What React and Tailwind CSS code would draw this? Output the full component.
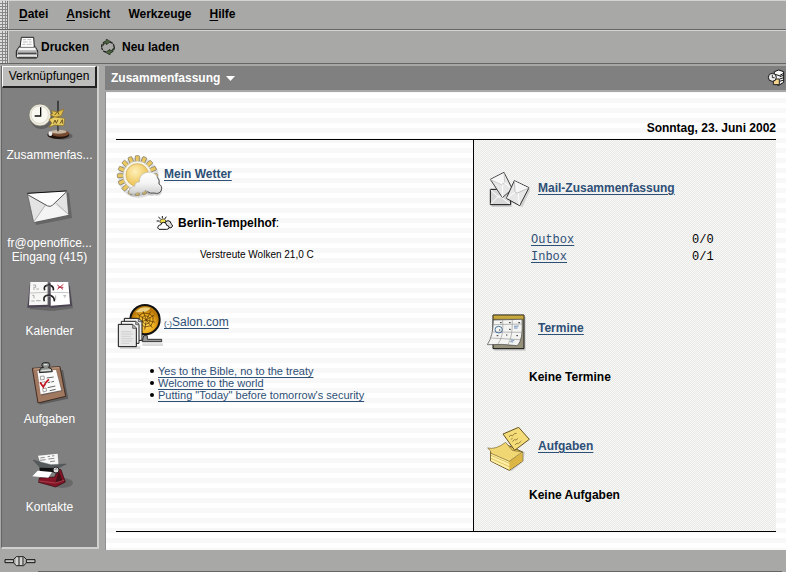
// src/App.jsx

import React from 'react';

const ClockIcon = () => (
  <svg className="h-11 w-12" viewBox="78 21 144 132" aria-hidden="true">
    <ellipse cx="187" cy="138" rx="31" ry="11" fill="#444" opacity="0.55" />
    <circle cx="124" cy="83" r="34" fill="#333" opacity="0.4" />
    <ellipse cx="175" cy="134" rx="33" ry="13" fill="#21130d" />
    <ellipse cx="181" cy="130" rx="27" ry="10" fill="#774a32" />
    <ellipse cx="176" cy="125" rx="24" ry="6" fill="#c6b5a0" />
    <ellipse cx="151" cy="131" rx="6" ry="7" fill="#eee" />
    <path d="M174 32v92" stroke="#222" strokeWidth="4" />
    <path d="M177 60v60" stroke="#777" strokeWidth="2" />
    <circle cx="120" cy="75" r="33" fill="#efece0" stroke="#6a685e" strokeWidth="2" />
    <circle cx="119" cy="74" r="26" fill="#faf9f1" stroke="#cfccbd" strokeWidth="2" />
    <path d="M122 52v26h-18" fill="none" stroke="#111" strokeWidth="4" />
    <path d="M155 62l17 4 20-9-8 20-18 5-16-8 8-3z" fill="#dfbf50" stroke="#8b6d1c" strokeWidth="2" />
    <path d="M147 88l17-7 30 4-3 22-27-2-17 7 8-13z" fill="#eace66" stroke="#8b6d1c" strokeWidth="2" />
    <path d="M164 75l9-10 4 9M160 101l5-11 4 10 5-11M180 101l7-12v12" fill="none" stroke="#6b561d" strokeWidth="3" />
  </svg>
);

const EnvelopeIcon = () => (
  <svg className="h-11 w-12" viewBox="78 285 144 132" aria-hidden="true">
    <path d="M90 320l117-12 9 76-108 21z" fill="#333" opacity="0.35" />
    <path d="M82 311l118-8 6 71-105 23z" fill="#e3e3e3" stroke="#555" strokeWidth="2" />
    <path d="M101 396l39-54 23 1 43 31z" fill="#f4f4f4" />
    <path d="M101 396l36-52M205 373l-36-33" fill="none" stroke="#999" strokeWidth="2" />
    <path d="M82 311l118-8-43 43q-7 6-13 1z" fill="#fcfcfc" />
    <path d="M83 314l60 34q8 3 14-2l42-40" fill="none" stroke="#555" strokeWidth="3" />
    <path d="M82 310l118-7" stroke="#111" strokeWidth="3" />
  </svg>
);

const PlannerIcon = () => (
  <svg className="h-11 w-12" viewBox="78 24 144 132" aria-hidden="true">
    <path d="M93 63h117l9 67-60 8-69-5z" fill="#333" opacity="0.35" />
    <path d="M90 53h117l9 69-62 7-7-4-65 3z" fill="#4c4453" />
    <path d="M91 51h53v68l-57 2z" fill="#f7f7f5" />
    <path d="M150 51h55l5 67-58 4z" fill="#fff" />
    <path d="M90 84l54-2M151 82l55 1" stroke="#aaa" strokeWidth="2" />
    <path d="M144 52v68M151 53v68" stroke="#777" strokeWidth="3" />
    <path d="M134 76q-4-13 7-15h9q12 3 10 15M133 109q-5-15 8-18h9q14 4 13 18" fill="none" stroke="#222" strokeWidth="5" />
    <path d="M139 63h13M138 94h15" stroke="#aaa" strokeWidth="2" />
    <path d="M99 60h8v7h-7M99 72h6M109 72h8M97 91h5v9M94 108h10M108 107h14M190 92h7l-4 6M167 91v14" fill="none" stroke="#888" strokeWidth="2" />
    <path d="M172 60l17 13M190 58l-18 15M174 67h16" stroke="#b63449" strokeWidth="3" />
  </svg>
);

const ClipboardIcon = () => (
  <svg className="h-11 w-12" viewBox="78 288 144 132" aria-hidden="true">
    <path d="M105 318l84-3 16 86-86 18z" fill="#333" opacity="0.45" />
    <path d="M97 310l83-5 17 89-83 20z" fill="#a17860" stroke="#422b21" strokeWidth="3" />
    <path d="M101 312l77-4" stroke="#c8a38b" strokeWidth="3" />
    <path d="M111 322l57-5 20 61-64 14z" fill="#555" opacity="0.6" />
    <path d="M112 318l56-3 16 61-62 12z" fill="#fbfbfb" />
    <path d="M121 334l11-1 1 10-11 2zM124 352l11-2 2 10-11 2zM128 371l10-2 2 9-10 3z" fill="none" stroke="#777" strokeWidth="2" />
    <path d="M140 339l21-3M143 353l8-2M154 351l8-2M143 368l23-5M149 377l18-4" stroke="#666" strokeWidth="3" />
    <path d="M120 352l10 14q8-17 17-23" fill="none" stroke="#c51421" strokeWidth="5" />
    <path d="M118 323q-1-15 13-16l-5-4v-6q2-4 7-4h10q5 0 6 5v5l-4 4q12 2 12 13z" fill="#8b908d" stroke="#222" strokeWidth="3" />
    <path d="M124 317l29-2M132 299h10" stroke="#dfe3e0" strokeWidth="4" />
  </svg>
);

const RolodexIcon = () => (
  <svg className="h-11 w-12" viewBox="78 117 144 132" aria-hidden="true">
    <ellipse cx="187" cy="219" rx="32" ry="15" fill="#333" opacity="0.3" />
    <path d="M114 137l59-6 3 42-50 3z" fill="#f7f7f7" />
    <path d="M121 144l13-2M120 151l17-2M143 140l7-1M156 138l7-1M145 147l18-2M150 155l15-2" stroke="#555" strokeWidth="2" />
    <path d="M99 150l54 14 46-2-31 16-47-4z" fill="#555b5d" stroke="#3c4041" strokeWidth="1" />
    <path d="M118 173l44 1v13l-42-1z" fill="#101010" />
    <path d="M118 204l46-3 10-24 9 2 13 37-29 15-51-14z" fill="#821426" stroke="#2e070d" strokeWidth="2" />
    <path d="M166 218l10-36 12 31z" fill="#451018" />
    <path d="M117 213l48 6 27-8" fill="none" stroke="#bd5360" strokeWidth="2" />
    <path d="M113 182l43 4-11 17-48-4z" fill="#fff" />
    <circle cx="168" cy="180" r="9" fill="#dedede" stroke="#222" strokeWidth="3" />
    <path d="M164 180q4-8 8-2" fill="none" stroke="#777" strokeWidth="3" />
  </svg>
);

const RAYS = Array.from({ length: 16 }, (_, i) => i * 22.5);

const SunIcon = () => (
  <svg className="h-12 w-12 shrink-0" viewBox="33 39 144 144" aria-hidden="true">
    <defs>
      <radialGradient id="sun" cx="40%" cy="35%">
        <stop offset="0" stopColor="#fff1bb" />
        <stop offset="1" stopColor="#efca65" />
      </radialGradient>
      <linearGradient id="cloud" x1="0" y1="0" x2="0" y2="1">
        <stop offset="0" stopColor="#fff" />
        <stop offset="0.5" stopColor="#f4f4f4" />
        <stop offset="1" stopColor="#cfcfcf" />
      </linearGradient>
    </defs>
    <circle cx="101" cy="113" r="55" fill="none" stroke="#999" strokeWidth="12" opacity="0.3" />
    {RAYS.map((angle) => (
      <rect
        key={angle}
        x="91" y="47" width="12" height="20" rx="2"
        fill="#ebc85f" stroke="#77715f" strokeWidth="2"
        transform={`rotate(${angle} 97 107)`}
      />
    ))}
    <circle cx="97" cy="106" r="43" fill="#f7f4e8" stroke="#b5b2a6" strokeWidth="2" />
    <circle cx="97" cy="105" r="34" fill="url(#sun)" stroke="#c9a24a" strokeWidth="2" />
    <path d="M75 166q-4-18 14-22 0-13 13-12 2-28 26-31 22-2 29 14 10 8 5 21 13 6 8 22-5 12-22 8-12 6-26-7-13 13-23 5-11 10-24 2z" fill="#888" opacity="0.4" />
    <path d="M73 159q-4-17 16-20 1-13 14-13 0-25 24-29 23-3 30 16 9 6 5 19 11 6 7 19-6 13-22 8-12 4-25-9-13 14-23 6-12 10-26 3z" fill="url(#cloud)" stroke="#bbb" strokeWidth="2" />
    <path d="M157 112q8 7 5 20 11 6 7 19-6 13-22 8-10 3-20-4" fill="none" stroke="#555" strokeWidth="3" />
  </svg>
);

const PartlyCloudyIcon = () => (
  <svg className="size-[18px]" viewBox="156 222 54 54" aria-hidden="true">
    <path d="M163 231l7 6M175 228v7M187 230l-5 7M158 243h8" stroke="#111" strokeWidth="3" />
    <path d="M168 248v-6l6-5h7l5 6-5 7z" fill="#f3df4c" stroke="#222" strokeWidth="2" />
    <path d="M183 253q0-11 9-11 9 1 9 9 6 3 4 9-3 5-11 3z" fill="#ddd" stroke="#111" strokeWidth="3" />
    <path d="M165 268q-7-4-2-10 2-4 7-3 2-8 9-8 8 0 9 9 8 1 7 7-1 5-7 5z" fill="#fff" stroke="#111" strokeWidth="3" />
  </svg>
);

const NewsIcon = () => (
  <svg className="h-12 w-12 shrink-0" viewBox="33 21 144 144" aria-hidden="true">
    <defs>
      <radialGradient id="globe" cx="50%" cy="65%">
        <stop offset="0" stopColor="#ffd75a" />
        <stop offset="0.6" stopColor="#f0b020" />
        <stop offset="1" stopColor="#b97808" />
      </radialGradient>
    </defs>
    <path d="M45 158h61M112 149h62" stroke="#aaa" strokeWidth="8" opacity="0.4" />
    <path d="M116 122h11v11h43v7h-58z" fill="#999" stroke="#333" strokeWidth="3" />
    <circle cx="120" cy="74" r="44" fill="url(#globe)" stroke="#111" strokeWidth="6" />
    <path d="M91 52q15-20 45-14-4 12-23 13-11 1-22 1z" fill="#fff3b4" opacity="0.7" />
    <g fill="none" stroke="#4b2b00" strokeWidth="2">
      <path d="M124 75l-27-18M124 75l-10-27M124 75l13-25M124 75l24-15M124 75l26 7M124 75l18 23M124 75l-5 29M124 75l-27 10" />
      <path d="M103 61l11-7 18 2 12 8v15l-6 13-19 4-16-14zM112 67l5-5 12 2 6 6v8l-4 7-11 3-7-8z" />
    </g>
    <path d="M58 70h42l11 9v57H58z" fill="#eee" stroke="#111" strokeWidth="3" />
    <path d="M49 79h43l10 9v57H49z" fill="#f5f5f5" stroke="#222" strokeWidth="3" />
    <path d="M40 88h43l11 11v56H40z" fill="#e8e8e8" stroke="#111" strokeWidth="3" />
    <path d="M83 89v11h11M92 80v9h9M100 71v9h10" fill="#bbb" stroke="#333" strokeWidth="2" />
    <path d="M49 110h31M49 117h36M49 124h28M49 131h36M49 138h32M49 145h24" stroke="#c3c3c3" strokeWidth="2" />
  </svg>
);

const MailsIcon = () => (
  <svg className="size-11 shrink-0" viewBox="69 42 132 132" aria-hidden="true">
    <path d="M83 105h60v51H83zM155 83l44 21-24 53-42-20z" fill="#aaa" opacity="0.45" />
    <path d="M79 103h61v46H79z" fill="#d8d8d8" stroke="#111" strokeWidth="3" />
    <path d="M80 147l25-25 33 25M80 105l27 24" fill="none" stroke="#fff" strokeWidth="3" />
    <path d="M79 73l41-21 25 50-30 26z" fill="#e7e7e7" stroke="#444" strokeWidth="3" />
    <path d="M80 74l32 15 10-6-2-29" fill="#f7f7f7" stroke="#bbb" strokeWidth="2" />
    <path d="M115 127l1-38M143 101l-22-18" stroke="#fff" strokeWidth="3" />
    <path d="M151 77l44 21-28 54-40-22z" fill="#e7e7e7" stroke="#333" strokeWidth="3" />
    <path d="M151 78l2 31q1 6 7 5l34-15" fill="#f7f7f7" stroke="#aaa" strokeWidth="2" />
    <path d="M128 129l25-17M166 150l-3-36" stroke="#fff" strokeWidth="3" />
  </svg>
);

const CalendarIcon = () => (
  <svg className="size-11 shrink-0" viewBox="69 27 132 132" aria-hidden="true">
    <path d="M91 51h94v101H91z" fill="#888" opacity="0.35" />
    <path d="M87 45h93v101H87z" fill="#95917b" stroke="#111" strokeWidth="3" />
    <path d="M88 46h91v12H88z" fill="#c6a83f" stroke="#68551c" strokeWidth="2" />
    <path d="M88 60l86-2q4 62-14 79-43-6-90-3 18-27 18-74z" fill="#f4f4f3" stroke="#444" strokeWidth="2" />
    <path d="M90 74l84-2M87 96l86 1M80 114l89 5M116 60q4 50-15 73M145 60q1 53-14 75" fill="none" stroke="#999" strokeWidth="2" />
    <path d="M108 68h5M135 68h5M163 68h5M135 88h5M105 90h4M126 105h4M98 107h5M157 107h5" stroke="#333" strokeWidth="3" />
    <path d="M150 79l14-1M150 84h11M141 120l10 1M139 125l9 1" stroke="#6c91b6" strokeWidth="3" />
    <ellipse cx="104" cy="89" rx="11" ry="10" fill="none" stroke="#47739b" strokeWidth="3" />
  </svg>
);

const NotesIcon = () => (
  <svg className="size-11 shrink-0" viewBox="67 36 132 132" aria-hidden="true">
    <path d="M82 112l44-13 54 12-3 28-38 31-57-28z" fill="#999" opacity="0.4" />
    <path d="M78 111l45-23 51 23v27l-40 28-56-28z" fill="#f0cf60" stroke="#6a5520" strokeWidth="3" />
    <path d="M79 114l55 24 39-26v25l-39 27-55-26z" fill="#fff0a5" />
    <path d="M134 139l39-26v25l-39 27z" fill="#dfb843" />
    <path d="M79 121l55 24 39-25M79 130l55 25 39-27" fill="none" stroke="#d0ae4b" strokeWidth="2" />
    <path d="M69 99q24 6 54-17l20 24 30 5-39 28-55-24q1-8-10-16z" fill="#f1d773" stroke="#75602a" strokeWidth="2" />
    <path d="M115 57l47-20 32 36-44 33z" fill="#f4dc79" stroke="#665121" strokeWidth="3" />
    <path d="M133 66l5-6 5 3 6-7 7-1M143 80l6-6 5 1 6-5M151 90l6-6 4 2 9-8M139 73l5-3" fill="none" stroke="#6c5924" strokeWidth="2" />
  </svg>
);

const PrinterIcon = () => (
  <svg className="h-6 w-6" viewBox="45 102 72 72" aria-hidden="true">
    <path d="M49 150l9-14h47l8 14v16q-1 5-5 5H54q-5 0-5-5z" fill="#e6e6e4" stroke="#111" strokeWidth="3" />
    <path d="M64 109h37l2 31H60z" fill="#fff" stroke="#222" strokeWidth="3" />
    <path d="M69 116h9M82 116h12M69 123h14M87 123h8M67 130h9M80 130h15" stroke="#999" strokeWidth="2" />
    <path d="M57 139h49l5 11H51z" fill="#f6f6f4" stroke="#555" strokeWidth="2" />
    <path d="M51 153h61v9H51z" fill="#aaa" />
    <path d="M54 157h55M55 169h53" stroke="#333" strokeWidth="3" />
  </svg>
);

const ReloadIcon = () => (
  <svg className="h-4 w-4" viewBox="300 117 48 48" aria-hidden="true">
    <path d="M305 141q-1-12 12-15M330 126q12 3 12 15M343 141q0 13-12 15M318 156q-12-3-13-14" fill="none" stroke="#222" strokeWidth="4" strokeDasharray="9 3" />
    <path d="M319 117l13 8-13 9v-5q-7 1-10 8-1-13 10-15zM330 165l-13-8 13-9v5q7-1 10-8 1 13-10 15z" fill="#4d6541" stroke="#1c2416" strokeWidth="2" />
  </svg>
);

const SummaryIcon = () => (
  <svg className="size-[18px]" viewBox="441 27 54 54" aria-hidden="true">
    <path d="M463 35l13-5 15 5v32l-15 9-13-5z" fill="#f7f7f7" stroke="#111" strokeWidth="3" />
    <path d="M465 43l13 4 13-7M479 50l12-4M479 57l12-4M479 64l12-4" fill="none" stroke="#111" strokeWidth="3" />
    <path d="M460 57h18v17h-18z" fill="#f5d48d" stroke="#222" strokeWidth="3" />
    <circle cx="457" cy="52" r="12" fill="#eee" stroke="#111" strokeWidth="3" />
    <path d="M457 44v9h7" fill="none" stroke="#333" strokeWidth="3" />
  </svg>
);

const PlugIcon = () => (
  <svg className="h-3 w-8" viewBox="9 434 96 36" aria-hidden="true">
    <path d="M12 448h27v9H12zM75 448h27v9H75z" fill="#c4c4c2" stroke="#111" strokeWidth="3" />
    <path d="M38 447l8-8h22l8 8v11l-8 8H46l-8-8z" fill="#b9b9b4" stroke="#222" strokeWidth="3" />
    <path d="M48 441v23M60 441v23" stroke="#eee" strokeWidth="3" />
    <path d="M54 438v29M66 440v25" stroke="#333" strokeWidth="3" />
  </svg>
);

const MENUS = ['Datei', 'Ansicht', 'Werkzeuge', 'Hilfe'];

const SHORTCUTS = [
  { icon: ClockIcon, lines: ['Zusammenfas...'] },
  { icon: EnvelopeIcon, lines: ['fr@openoffice...', 'Eingang (415)'] },
  { icon: PlannerIcon, lines: ['Kalender'] },
  { icon: ClipboardIcon, lines: ['Aufgaben'] },
  { icon: RolodexIcon, lines: ['Kontakte'] },
];

const HEADLINES = [
  'Yes to the Bible, no to the treaty',
  'Welcome to the world',
  'Putting "Today" before tomorrow\'s security',
];

const FOLDERS = [
  { name: 'Outbox', count: '0/0' },
  { name: 'Inbox', count: '0/1' },
];

// Dotted grip at the left end of each bar
const Grip = () => (
  <div className="w-2 border-r border-[#777] bg-[radial-gradient(circle_at_1px_1px,#ddd_1px,#888_1px)] bg-[size:3px_3px]" />
);

const Link = ({ children, className = '' }) => (
  <a href="#" className={`text-[#2e4f76] underline underline-offset-2 ${className}`}>{children}</a>
);

// Icon with a linked title next to it
const Heading = ({ icon: Icon, className = '', children }) => (
  <h2 className={`flex items-center ${className}`}>
    <Icon />
    <span className="pb-1.5 leading-4">{children}</span>
  </h2>
);

const App = () => {
  return (
    <div className="flex min-h-screen flex-col bg-[#a8a8a6] font-['Liberation_Sans',Arial,sans-serif] text-xs text-black">
      <nav className="flex h-[30px] border-t border-b border-t-[#d4d4d2] border-b-[#666]">
        <Grip />
        <div className="flex items-center gap-[18px] border-l border-[#d4d4d2] px-2.5 pb-0.5 font-bold">
          {MENUS.map((menu) => (
            <button key={menu} type="button">
              {menu === 'Werkzeuge' ? menu : (
                <><span className="underline underline-offset-2">{menu[0]}</span>{menu.slice(1)}</>
              )}
            </button>
          ))}
        </div>
      </nav>

      <div className="flex h-[34px] border-t border-b border-t-[#d4d4d2] border-b-[#666]">
        <Grip />
        <div className="flex items-center gap-[11px] border-l border-[#d4d4d2] px-1.5 font-bold">
          <button type="button" className="flex items-center gap-0.5"><PrinterIcon />Drucken</button>
          <button type="button" className="flex items-center gap-1.5"><ReloadIcon />Neu laden</button>
        </div>
      </div>

      <div className="flex grow pt-0.5">
        <aside className="mr-1.5 ml-px w-[98px] shrink-0 self-stretch pb-px">
          <div className="flex h-full flex-col border-r-2 border-b-2 border-l border-r-[#d0d0ce] border-b-[#d0d0ce] border-l-[#666] bg-[#808080]">
            <button type="button" className="h-[22px] border-t border-r-2 border-b-2 border-l border-t-white border-r-[#222] border-b-[#222] border-l-white bg-[#bdbdbb] pb-0.5">
              Verknüpfungen
            </button>
            <ul className="pt-[9px]">
              {SHORTCUTS.map(({ icon: Icon, lines }) => (
                <li key={lines[0]} className="h-[88px]">
                  <button type="button" className="flex w-full flex-col items-center gap-[7px] text-white">
                    <Icon />
                    <span className="leading-[14px] whitespace-nowrap">
                      {lines.map((line) => <span key={line} className="block">{line}</span>)}
                    </span>
                  </button>
                </li>
              ))}
            </ul>
          </div>
        </aside>

        <main className="flex min-w-0 grow flex-col">
          <div className="flex h-6 items-center justify-between bg-[#808080] pr-px pl-1.5">
            <button type="button" className="flex items-center gap-1.5 font-bold text-white">
              Zusammenfassung
              <svg className="h-[5px] w-[9px]" viewBox="0 0 9 5" aria-hidden="true"><path d="M0 0h9L4.5 5z" fill="#fff" /></svg>
            </button>
            <SummaryIcon />
          </div>

          <div className="mt-0.5 grow border-l border-[#909090] bg-[linear-gradient(#f8f8f8_0_1px,#fff_1px_6px,#f8f8f8_6px_10px)] bg-[size:100%_10px] px-2.5 pt-7 pb-[18px]">
            <p className="border-b border-black pb-[3px] text-right leading-4 font-bold">Sonntag, 23. Juni 2002</p>
            <div className="grid grid-cols-[358fr_302fr] border-b border-black">
              <section className="border-r border-black pt-[13px]">
                <Heading icon={SunIcon} className="font-bold"><Link>Mein Wetter</Link></Heading>
                <p className="mt-[13px] flex h-[18px] items-center gap-1 pl-10">
                  <PartlyCloudyIcon />
                  <span><b>Berlin-Tempelhof</b>:</span>
                </p>
                <p className="mt-4 pl-[84px] text-[10px] leading-[14px]">Verstreute Wolken 21,0 C</p>

                <Heading icon={NewsIcon} className="mt-10">
                  <Link><span className="text-[8px]">(-)</span>Salon.com</Link>
                </Heading>
                <ul className="mt-[15px] pl-[34px] text-[11px] leading-3">
                  {HEADLINES.map((title) => (
                    <li key={title} className="flex items-center gap-1">
                      <span className="size-1 rounded-full bg-black" />
                      <Link className="underline-offset-1">{title}</Link>
                    </li>
                  ))}
                </ul>
              </section>

              <section className="bg-[repeating-conic-gradient(#e9e9e7_0_25%,#f8f8f7_0_50%)] bg-[size:2px_2px] pt-[29px] pb-7 pl-[13px]">
                <Heading icon={MailsIcon} className="gap-[7px] font-bold"><Link>Mail-Zusammenfassung</Link></Heading>
                <table className="mt-[18px] ml-11 font-['Liberation_Mono','Courier_New',monospace]">
                  <tbody>
                    {FOLDERS.map(({ name, count }) => (
                      <tr key={name} className="h-[17px]">
                        <td className="w-[161px] leading-4"><Link>{name}</Link></td>
                        <td className="leading-4">{count}</td>
                      </tr>
                    ))}
                  </tbody>
                </table>

                <Heading icon={CalendarIcon} className="mt-11 gap-[7px] font-bold"><Link>Termine</Link></Heading>
                <p className="mt-4 pl-[42px] leading-4 font-bold">Keine Termine</p>

                <Heading icon={NotesIcon} className="mt-[42px] gap-[7px] font-bold"><Link>Aufgaben</Link></Heading>
                <p className="mt-4 pl-[42px] leading-4 font-bold">Keine Aufgaben</p>
              </section>
            </div>
          </div>
        </main>
      </div>

      <footer className="flex h-[22px] items-center px-1">
        <PlugIcon />
        <div className="ml-0.5 h-px grow self-end bg-[#666]" />
      </footer>
    </div>
  );
};

export default App;
